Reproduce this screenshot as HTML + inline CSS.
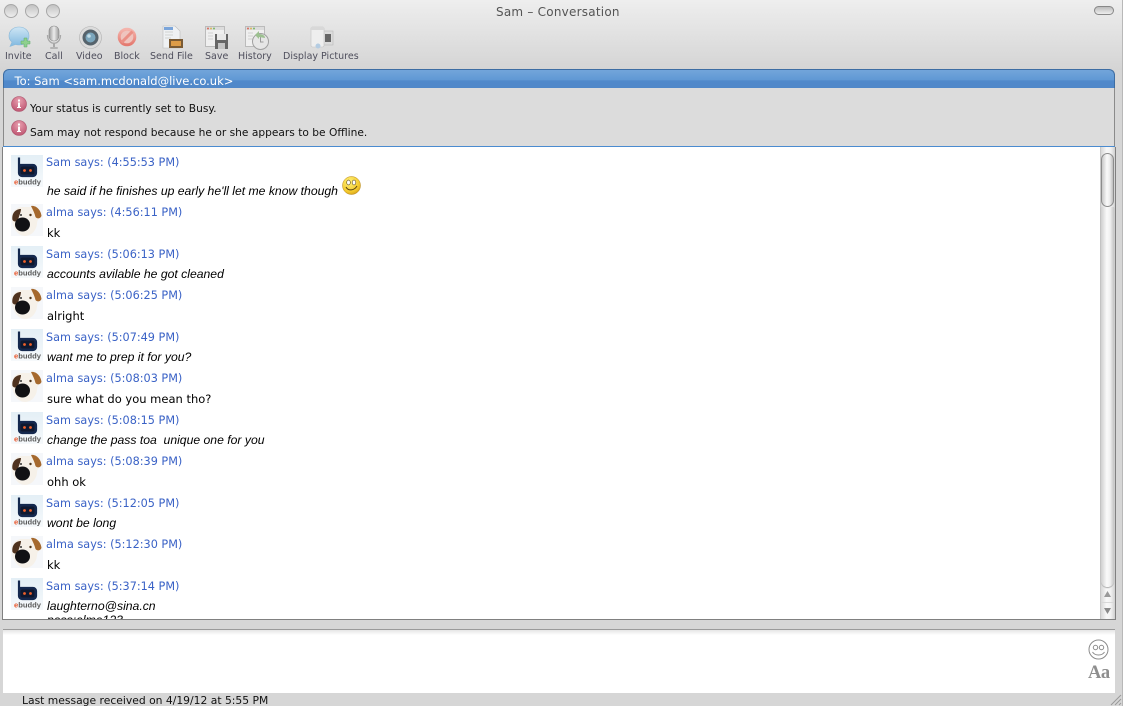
<!DOCTYPE html>
<html><head><meta charset="utf-8">
<style>
html,body{margin:0;padding:0}
body{width:1123px;height:706px;position:relative;overflow:hidden;background:#d6d6d6;font-family:"DejaVu Sans","Liberation Sans",sans-serif;}
#wrap{position:absolute;left:0;top:0;width:1123px;height:706px;overflow:hidden;filter:blur(.3px)}
.a{position:absolute;white-space:nowrap}
#top{left:0;top:0;width:1123px;height:70px;background:linear-gradient(#eeeeee,#d4d4d4)}
.light{top:4px;width:12px;height:12px;border-radius:50%;border:1px solid #a8a8a8;background:linear-gradient(#c2c2c2,#eeeeee);box-sizing:content-box}
.tb{font-size:9.5px;color:#4e4e5c;top:51px;line-height:12px}
#title{left:496px;top:5px;font-size:12px;line-height:15px;color:#555;letter-spacing:.23px}
#blue{left:3px;top:69px;width:1112px;height:19px;border-radius:6px 6px 0 0;border:1px solid #3d6da3;border-bottom:0;box-sizing:border-box;background:linear-gradient(#72a5da 0,#6098d4 55%,#5089cb 60%,#5087c8 100%)}
#to{left:14.5px;top:74px;font-size:11.5px;line-height:15px;color:#fff}
#gr{left:3px;top:88px;width:1112px;height:58px;background:#dcdcdc;border-left:1px solid #8a8a8a;border-right:1px solid #8a8a8a;box-sizing:border-box}
#line{left:3px;top:146px;width:1112px;height:1px;background:#4a8bd0}
#chat{left:2px;top:147px;width:1114px;height:473px;background:#fff;border-left:1px solid #808080;border-right:1px solid #808080;border-bottom:1px solid #808080;box-sizing:border-box;overflow:hidden}
.st{font-size:10.65px;color:#111;line-height:13px;left:30px}
.h{left:46px;font-size:11.25px;line-height:14px;color:#3a62c6}
.m{left:47px;font-size:11.5px;line-height:15px;color:#000}
.i{font-family:"Liberation Sans",sans-serif;font-style:italic;font-size:12.2px}
#input{left:3px;top:629px;width:1112px;height:64px;background:#fff;border-top:1px solid #9a9a9a;box-sizing:border-box}
#inputshade{left:3px;top:630px;width:1112px;height:5px;background:linear-gradient(#e6e6e6,#fff)}
#status{left:22px;top:694px;font-size:10.75px;line-height:14px;color:#111}
#sb{left:1100px;top:147px;width:15px;height:472px;background:linear-gradient(90deg,#d8d8d8,#f8f8f8 40%,#f2f2f2 70%,#d0d0d0);border-left:1px solid #c8c8c8;box-sizing:border-box}
#thumb{left:1101px;top:153px;width:13px;height:54px;border-radius:7px;border:1px solid #8c8c8c;box-sizing:border-box;background:linear-gradient(90deg,#c8c8c8,#fafafa 45%,#ececec 70%,#bdbdbd)}
#thumb2{left:1101px;top:207px;width:13px;height:380px;border-radius:0 0 7px 7px;background:linear-gradient(90deg,#cfcfcf,#fafafa 45%,#f0f0f0 70%,#c4c4c4);box-shadow:0 1px 1px #aaa}
svg{position:absolute;overflow:visible}
</style></head><body>
<svg width="0" height="0" style="position:absolute">
<defs>
<linearGradient id="sambg" x1="0" y1="0" x2="0" y2="1"><stop offset="0" stop-color="#e4eff6"/><stop offset="1" stop-color="#f6f9fb"/></linearGradient>
<symbol id="sam" viewBox="0 0 32 32">
<rect width="32" height="32" fill="url(#sambg)"/>
<path d="M8 2.500 V18 a3 3 0 0 0 3 3 H22 a3 3 0 0 0 3 -3 V13 a3 3 0 0 0 -3 -3 H8" fill="#1a2a4c" stroke="#14284e" stroke-width="2.200"/>
<rect x="9.500" y="11.500" width="14" height="8" rx="2" fill="#0e1830"/>
<circle cx="13.500" cy="15.500" r="1.400" fill="#f0602a"/><circle cx="19.500" cy="15.500" r="1.400" fill="#f0602a"/>
<text x="3" y="29.500" font-family="Liberation Sans" font-size="7.6" font-weight="bold" fill="#5a5a5a"><tspan fill="#e8552a">e</tspan>buddy</text>
</symbol>
<symbol id="dog" viewBox="0 0 32 32">
<rect width="32" height="32" fill="#f5f7fa"/>
<path d="M1 14 C1 7 6 3 11 3 L19 3 C25 3 30 8 30 13 C27 15 26 17 26 20 C25 27 20 32 14 32 C7 32 1 24 1 14Z" fill="#f6f1e9"/>
<path d="M1.500 16 C0.500 10 4 5 10 5 C10 8 8 12 7 16 C5 18 3 18 1.500 16Z" fill="#4f3320"/>
<path d="M20 2 C25 1 30 6 30.500 12 C29 15 26 15 24.500 13 C23.500 9 22 6 20 2Z" fill="#a5692e"/>
<ellipse cx="11.500" cy="20.500" rx="7.500" ry="7" fill="#111114"/>
<circle cx="10" cy="11" r="1" fill="#333"/><circle cx="19.500" cy="11" r="1.200" fill="#4a331c"/>
</symbol>
<radialGradient id="smile" cx=".4" cy=".3" r=".8"><stop offset="0" stop-color="#fff27a"/><stop offset=".7" stop-color="#f2c72a"/><stop offset="1" stop-color="#c8901a"/></radialGradient>
<radialGradient id="pink" cx=".5" cy=".3" r=".8"><stop offset="0" stop-color="#e8a0b0"/><stop offset="1" stop-color="#b84a68"/></radialGradient>
<symbol id="info" viewBox="0 0 16 16"><circle cx="8" cy="8" r="7.500" fill="url(#pink)" stroke="#a85068" stroke-width=".6"/><rect x="7" y="3.500" width="2" height="2" fill="#fff"/><rect x="7" y="6.500" width="2" height="5.500" fill="#fff"/><rect x="6" y="11" width="4" height="1" fill="#fff"/></symbol>
<linearGradient id="bub" x1="0" y1="0" x2="0" y2="1"><stop offset="0" stop-color="#cfe6f4"/><stop offset="1" stop-color="#7fb8e0"/></linearGradient>
<linearGradient id="mic" x1="0" y1="0" x2="1" y2="0"><stop offset="0" stop-color="#9a9a9a"/><stop offset=".5" stop-color="#ececec"/><stop offset="1" stop-color="#9a9a9a"/></linearGradient>
<linearGradient id="blk" x1="0" y1="0" x2="0" y2="1"><stop offset="0" stop-color="#f4b4ac"/><stop offset="1" stop-color="#e47a70"/></linearGradient>
</defs></svg>
<div id="wrap">
<div class="a" id="top"></div>
<div class="a light" style="left:4px"></div>
<div class="a light" style="left:25px"></div>
<div class="a light" style="left:46px"></div>
<div class="a" style="left:1094px;top:6px;width:20px;height:9px;border-radius:5px;border:1px solid #888;background:linear-gradient(#bbb,#eee);box-sizing:border-box"></div>
<div class="a" id="title">Sam – Conversation</div>

<svg style="left:8px;top:26px" width="23" height="24" viewBox="0 0 23 24"><path d="M11 1 C17 1 21 5 21 10 C21 15 17 19 11 19 C9.500 19 8.500 19 7.500 18.500 L2 20.500 L4 16 C2 14.500 1 12.500 1 10 C1 5 5 1 11 1Z" fill="url(#bub)" stroke="#8ab8d8" stroke-width=".6"/><path d="M16 12h3v3h3v3h-3v3h-3v-3h-3v-3h3z" fill="#8ed08e" stroke="#5aaa68" stroke-width=".5"/></svg>
<svg style="left:46px;top:25px" width="16" height="25" viewBox="0 0 16 25"><rect x="3" y="1" width="10" height="15" rx="5" fill="url(#mic)" stroke="#8a8a8a" stroke-width=".6"/><path d="M1.500 10 C1.500 21 14.500 21 14.500 10" fill="none" stroke="#a8a8a8" stroke-width="1.300"/><rect x="7" y="18" width="2" height="4" fill="#a8a8a8"/><rect x="4" y="22" width="8" height="2" rx="1" fill="#b4b4b4"/></svg>
<svg style="left:79px;top:26px" width="23" height="23" viewBox="0 0 23 23"><circle cx="11.500" cy="11.500" r="11" fill="#dcdcdc" stroke="#b0b0b0" stroke-width=".6"/><circle cx="11.500" cy="11.500" r="8" fill="#56636c"/><circle cx="11.500" cy="11.500" r="5" fill="#7ba6bd"/><circle cx="10" cy="10" r="1.800" fill="#c2dde8"/></svg>
<svg style="left:117px;top:27px" width="20" height="20" viewBox="0 0 20 20"><circle cx="10" cy="10" r="9" fill="#efc4be"/><circle cx="10" cy="10" r="7.800" fill="none" stroke="url(#blk)" stroke-width="3"/><path d="M4.500 15.500 L15.500 4.500" stroke="#ea8f85" stroke-width="3"/></svg>
<svg style="left:162px;top:25px" width="21" height="24" viewBox="0 0 21 24"><path d="M1 1h12l5 5v17H1z" fill="#eff1f3" stroke="#bcbcbc" stroke-width=".6"/><rect x="2" y="2" width="9" height="3" fill="#7ba5da"/><path d="M3 7h8M3 10h8M3 13h6" stroke="#d2d2d2"/><rect x="7" y="14" width="14" height="9" fill="#7a5a34"/><rect x="9" y="16" width="10" height="5" fill="#dd9c48"/></svg>
<svg style="left:205px;top:26px" width="23" height="23" viewBox="0 0 23 23"><rect x="0.500" y="0.500" width="19" height="20" fill="#efefef" stroke="#bbb"/><rect x="1" y="1" width="18" height="3" fill="#dcdcdc"/><circle cx="3" cy="2.500" r="1" fill="#d96a5a"/><circle cx="6" cy="2.500" r="1" fill="#d9b85a"/><circle cx="9" cy="2.500" r="1" fill="#7ab86a"/><path d="M3 7h5M3 10h5M3 13h5" stroke="#d2d2d2"/><path d="M10 8h13v15H10z" fill="#666"/><rect x="12" y="8" width="9" height="6" fill="#e8e8e8"/><rect x="13" y="17" width="7" height="6" fill="#c4c4c4"/></svg>
<svg style="left:245px;top:26px" width="24" height="24" viewBox="0 0 24 24"><rect x="0.500" y="0.500" width="19" height="20" fill="#efefef" stroke="#bbb"/><rect x="1" y="1" width="18" height="3" fill="#dcdcdc"/><circle cx="3" cy="2.500" r="1" fill="#d96a5a"/><circle cx="6" cy="2.500" r="1" fill="#d9b85a"/><circle cx="9" cy="2.500" r="1" fill="#7ab86a"/><path d="M3 7h5M3 10h5M3 13h5" stroke="#d2d2d2"/><circle cx="15.500" cy="15.500" r="8" fill="#e6e6e6" stroke="#a0a0a0"/><path d="M15.500 11v5h3" stroke="#999" fill="none"/><path d="M10 9 L14 5 L14 8 C18 8 20 10 20 12 L14 11 L14 13Z" fill="#9cc090"/></svg>
<svg style="left:310px;top:26px" width="24" height="24" viewBox="0 0 24 24"><rect x="12" y="5" width="11" height="14" fill="#dcdcdc" stroke="#b8b8b8" stroke-width=".6"/><rect x="15" y="8" width="6" height="8" fill="#666"/><rect x="1" y="1" width="13" height="20" rx="1.500" fill="#eeeeee" stroke="#c4c4c4" stroke-width=".6"/><rect x="1" y="1" width="13" height="3" fill="#d8d8d8"/><circle cx="8" cy="20" r="2.500" fill="#b4cce2"/></svg>

<div class="a tb" style="left:5px">Invite</div>
<div class="a tb" style="left:45px">Call</div>
<div class="a tb" style="left:76px">Video</div>
<div class="a tb" style="left:114px">Block</div>
<div class="a tb" style="left:150px">Send File</div>
<div class="a tb" style="left:205px">Save</div>
<div class="a tb" style="left:238px">History</div>
<div class="a tb" style="left:283px">Display Pictures</div>

<div class="a" id="blue"></div>
<div class="a" id="to">To: Sam &lt;sam.mcdonald@live.co.uk&gt;</div>
<div class="a" id="gr"></div>
<svg style="left:11px;top:96px" width="16" height="16"><use href="#info" width="16" height="16"/></svg>
<div class="a st" style="top:102px">Your status is currently set to Busy.</div>
<svg style="left:11px;top:120px" width="16" height="16"><use href="#info" width="16" height="16"/></svg>
<div class="a st" style="top:126px">Sam may not respond because he or she appears to be Offline.</div>
<div class="a" id="line"></div>

<div class="a" id="chat"></div>

<svg style="left:11px;top:155px" width="32" height="32"><use href="#sam" width="32" height="32"/></svg>
<div class="a h" style="top:156px">Sam says: (4:55:53 PM)</div>
<div class="a m i" style="top:184px">he said if he finishes up early he'll let me know though</div>
<svg style="left:342px;top:176px" width="19" height="19" viewBox="0 0 19 19"><circle cx="9.500" cy="9.500" r="9" fill="url(#smile)" stroke="#b88a20" stroke-width=".5"/><ellipse cx="6.500" cy="6.500" rx="1.800" ry="2.400" fill="#fff" stroke="#5a4410" stroke-width=".6"/><ellipse cx="12" cy="6.500" rx="1.800" ry="2.400" fill="#fff" stroke="#5a4410" stroke-width=".6"/><path d="M4 11 C6 15 12 15 15 10" fill="none" stroke="#5a4410" stroke-width="1"/></svg>

<svg style="left:11px;top:204px" width="32" height="32"><use href="#dog" width="32" height="32"/></svg>
<div class="a h" style="top:206px">alma says: (4:56:11 PM)</div>
<div class="a m" style="top:226px">kk</div>

<svg style="left:11px;top:246px" width="32" height="32"><use href="#sam" width="32" height="32"/></svg>
<div class="a h" style="top:248px">Sam says: (5:06:13 PM)</div>
<div class="a m i" style="top:267px">accounts avilable he got cleaned</div>

<svg style="left:11px;top:287px" width="32" height="32"><use href="#dog" width="32" height="32"/></svg>
<div class="a h" style="top:289px">alma says: (5:06:25 PM)</div>
<div class="a m" style="top:309px">alright</div>

<svg style="left:11px;top:329px" width="32" height="32"><use href="#sam" width="32" height="32"/></svg>
<div class="a h" style="top:331px">Sam says: (5:07:49 PM)</div>
<div class="a m i" style="top:350px">want me to prep it for you?</div>

<svg style="left:11px;top:370px" width="32" height="32"><use href="#dog" width="32" height="32"/></svg>
<div class="a h" style="top:372px">alma says: (5:08:03 PM)</div>
<div class="a m" style="top:392px">sure what do you mean tho?</div>

<svg style="left:11px;top:412px" width="32" height="32"><use href="#sam" width="32" height="32"/></svg>
<div class="a h" style="top:414px">Sam says: (5:08:15 PM)</div>
<div class="a m i" style="top:433px;white-space:pre">change the pass toa  unique one for you</div>

<svg style="left:11px;top:453px" width="32" height="32"><use href="#dog" width="32" height="32"/></svg>
<div class="a h" style="top:455px">alma says: (5:08:39 PM)</div>
<div class="a m" style="top:475px">ohh ok</div>

<svg style="left:11px;top:495px" width="32" height="32"><use href="#sam" width="32" height="32"/></svg>
<div class="a h" style="top:497px">Sam says: (5:12:05 PM)</div>
<div class="a m i" style="top:516px">wont be long</div>

<svg style="left:11px;top:536px" width="32" height="32"><use href="#dog" width="32" height="32"/></svg>
<div class="a h" style="top:538px">alma says: (5:12:30 PM)</div>
<div class="a m" style="top:558px">kk</div>

<svg style="left:11px;top:578px" width="32" height="32"><use href="#sam" width="32" height="32"/></svg>
<div class="a h" style="top:580px">Sam says: (5:37:14 PM)</div>
<div class="a m i" style="top:599px">laughterno@sina.cn</div>
<div class="a" style="left:47px;top:613px;width:100px;height:6px;overflow:hidden"><div class="a m i" style="left:0;top:0">pass:alma123</div></div>

<div class="a" id="sb"></div>
<div class="a" id="thumb2"></div>
<div class="a" id="thumb"></div>
<svg style="left:1101px;top:587px" width="13" height="32" viewBox="0 0 13 32"><path d="M6.500 4 L10 10 H3Z" fill="#9a9a9a"/><path d="M6.500 27 L10 21 H3Z" fill="#8a8a8a"/><rect x="0" y="15" width="13" height="1" fill="#d8d8d8"/></svg>

<div class="a" id="input"></div>
<div class="a" id="inputshade"></div>
<svg style="left:1088px;top:639px" width="21" height="21" viewBox="0 0 21 21" fill="none" stroke="#8c8c8c"><circle cx="10.500" cy="10.500" r="9.500"/><circle cx="7.500" cy="8.500" r="2.200"/><circle cx="13.500" cy="8.500" r="2.200"/><path d="M4.500 13 C7 17 14 17 16.500 13"/></svg>
<div class="a" style="left:1088px;top:663px;font-family:'Liberation Serif',serif;font-weight:bold;font-size:18.5px;line-height:20px;color:#8e8e8e;letter-spacing:-.5px">Aa</div>
<div class="a" id="status">Last message received on 4/19/12 at 5:55 PM</div>
<svg style="left:1109px;top:693px" width="13" height="13" viewBox="0 0 13 13" stroke="#9a9a9a"><path d="M2 12 L12 2M6 12 L12 6M10 12 L12 10"/></svg>
<div class="a" style="left:1122px;top:0;width:1px;height:706px;background:#b8b8b8"></div>
</div>
</body></html>
